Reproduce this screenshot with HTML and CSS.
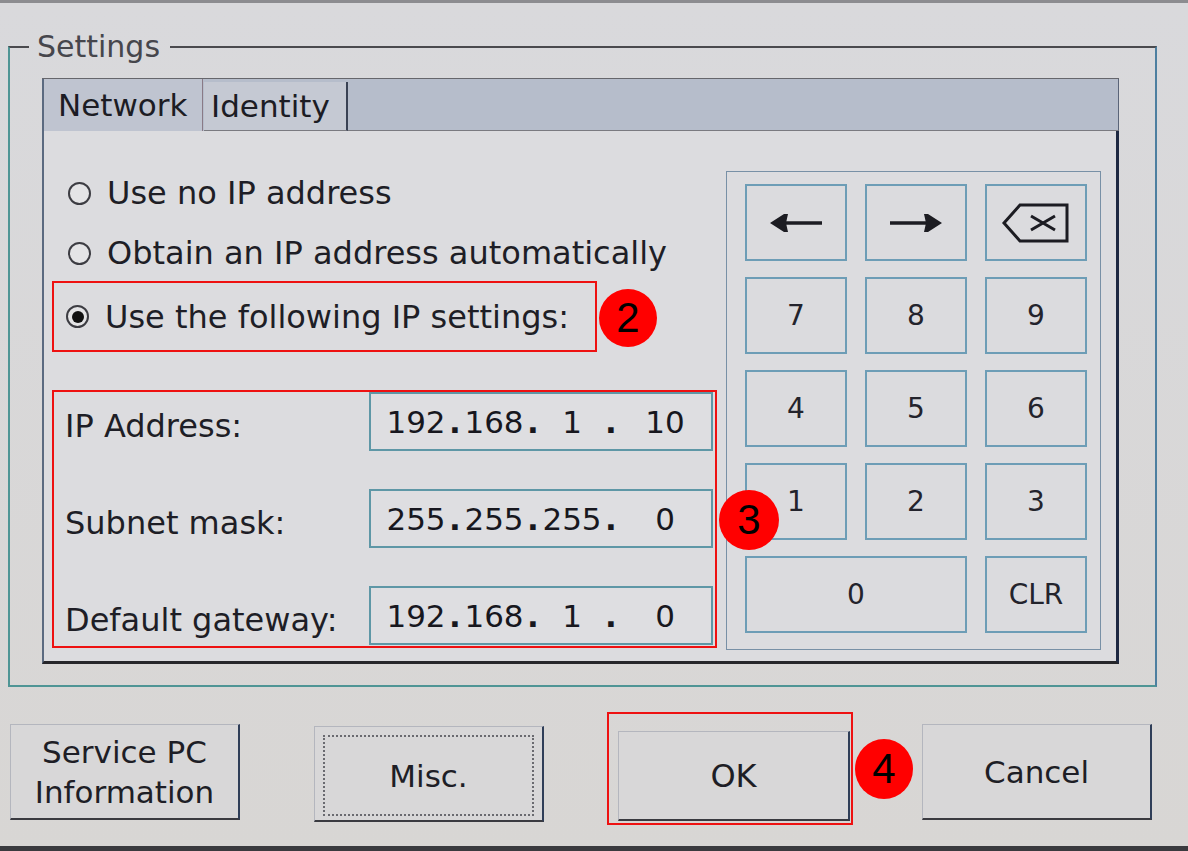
FILE: index.html
```html
<!DOCTYPE html>
<html lang="en">
<head>
  <meta charset="UTF-8" />
  <meta name="viewport" content="width=device-width, initial-scale=1.0" />
  <title>Settings</title>
  <link rel="stylesheet" href="styles.css">
</head>
<body>
  <div class="screen">
    <fieldset class="settings">
      <legend>Settings</legend>

      <div class="tabctl">
        <div class="tab-strip">
          <div class="tab active">Network</div>
          <div class="tab">Identity</div>
          <div class="tab-fill"></div>
        </div>

        <div class="panel">
          <div class="left-col">
            <div class="radio-row">
              <span class="radio"></span>
              <span>Use no IP address</span>
            </div>
            <div class="radio-row">
              <span class="radio"></span>
              <span>Obtain an IP address automatically</span>
            </div>
            <div class="mark-row">
              <div class="redbox radio-row picked">
                <span class="radio checked"></span>
                <span>Use the following IP settings:</span>
              </div>
              <div class="badge">2</div>
            </div>

            <div class="redbox fields">
              <div class="field">
                <span class="label">IP Address:</span>
                <div class="ipbox">
                  <span class="seg">192</span><span class="dot">.</span>
                  <span class="seg">168</span><span class="dot">.</span>
                  <span class="seg">1</span><span class="dot">.</span>
                  <span class="seg last">10</span>
                </div>
              </div>
              <div class="field">
                <span class="label">Subnet mask:</span>
                <div class="ipbox">
                  <span class="seg">255</span><span class="dot">.</span>
                  <span class="seg">255</span><span class="dot">.</span>
                  <span class="seg">255</span><span class="dot">.</span>
                  <span class="seg last">0</span>
                </div>
              </div>
              <div class="field">
                <span class="label">Default gateway:</span>
                <div class="ipbox">
                  <span class="seg">192</span><span class="dot">.</span>
                  <span class="seg">168</span><span class="dot">.</span>
                  <span class="seg">1</span><span class="dot">.</span>
                  <span class="seg last">0</span>
                </div>
              </div>
              <div class="badge badge-3">3</div>
            </div>
          </div>

          <div class="keypad">
            <div class="key">
              <svg width="54" height="22" viewBox="0 0 54 22">
                <line x1="12" y1="11" x2="53" y2="11" stroke="#1c1c22" stroke-width="3.5" />
                <path d="M1 11 L15 2 L19 2 L17 11 L19 20 L15 20 Z" fill="#1c1c22" />
              </svg>
            </div>
            <div class="key">
              <svg width="54" height="22" viewBox="0 0 54 22">
                <line x1="1" y1="11" x2="42" y2="11" stroke="#1c1c22" stroke-width="3.5" />
                <path d="M53 11 L39 2 L35 2 L37 11 L35 20 L39 20 Z" fill="#1c1c22" />
              </svg>
            </div>
            <div class="key">
              <svg width="70" height="42" viewBox="0 0 70 42">
                <path d="M19 3 H66 V39 H19 L3 21 Z" fill="none" stroke="#1c1c22" stroke-width="3" stroke-linejoin="miter" />
                <path d="M30 14 L54 28 M30 28 L54 14" stroke="#1c1c22" stroke-width="3" />
              </svg>
            </div>
            <div class="key">7</div>
            <div class="key">8</div>
            <div class="key">9</div>
            <div class="key">4</div>
            <div class="key">5</div>
            <div class="key">6</div>
            <div class="key">1</div>
            <div class="key">2</div>
            <div class="key">3</div>
            <div class="key wide">0</div>
            <div class="key">CLR</div>
          </div>
        </div>
      </div>
    </fieldset>

    <div class="actions">
      <button class="btn">Service PC<br>Information</button>
      <button class="btn focus"><span class="focus-ring">Misc.</span></button>
      <div class="ok-wrap">
        <button class="btn ok">OK</button>
        <span class="ok-mark"></span>
        <div class="badge badge-4">4</div>
      </div>
      <button class="btn">Cancel</button>
    </div>

    <div class="bezel"></div>
  </div>
</body>
</html>
```

FILE: styles.css
```css
body {
  margin: 0;
  padding: 0;
  background: #d9d8d9;
  font-family: "DejaVu Sans", Verdana, sans-serif;
  color: #1e1e26;
  overflow: hidden;
}

.screen {
  width: 1188px;
  height: 851px;
  box-sizing: border-box;
  padding-top: 32px;
  border-top: 3px solid #8c8c90;
  display: flex;
  flex-direction: column;
  background: linear-gradient(#d9d9dc, #d8d6d4);
}

/* group box */
.settings {
  box-sizing: border-box;
  width: 1149px;
  margin: -3px 0 0 8px;
  padding: 16px 36px 21px 32px;
  border: 2px solid #4f9595;
  border-top-color: #4a4a4e;
  border-right-color: #4d7fa0;
  min-width: 0;
}

.settings legend {
  font-size: 30px;
  line-height: 30px;
  color: #46464c;
  padding: 0 10px 0 8px;
  margin-left: -13px;
}

/* tab control */
.tabctl {
  width: 1077px;
}

.tab-strip {
  display: flex;
  align-items: flex-end;
  height: 53px;
  box-sizing: border-box;
  border-top: 1px solid #66666c;
  background: #b6bdcb;
}

.tab {
  box-sizing: border-box;
  font-size: 31px;
  display: flex;
  align-items: center;
  color: #1c1c24;
}

.tab.active {
  width: 161px;
  height: 52px;
  padding-left: 14px;
  background: #bfc4d0;
  border-left: 2px solid #5b6a80;
  border-right: 1px solid #8a7a86;
}

.tab:not(.active) {
  width: 144px;
  height: 49px;
  margin-left: 1px;
  padding-left: 7px;
  background: #c5c9d3;
  border-right: 2px solid #3a4254;
  border-bottom: 1px solid #7a7a80;
}

.tab-fill {
  flex: 1;
  height: 100%;
  box-sizing: border-box;
  border-bottom: 1px solid #7a7a80;
  border-right: 1px solid #5a6478;
}

.panel {
  display: flex;
  height: 533px;
  box-sizing: border-box;
  background: #dcdcdf;
  border-left: 2px solid #5b6a80;
  border-right: 3px solid #1d2842;
  border-bottom: 3px solid #26262a;
}

.left-col {
  width: 674px;
  margin-left: 8px;
  padding-top: 32px;
  position: relative;
}

.radio-row {
  display: flex;
  align-items: center;
  gap: 16px;
  height: 60px;
  padding-left: 16px;
  font-size: 32px;
}

.radio {
  box-sizing: border-box;
  width: 23px;
  height: 23px;
  border: 2px solid #3c3c42;
  border-radius: 50%;
  display: flex;
  align-items: center;
  justify-content: center;
  background: #e4e4e6;
}

.radio.checked::after {
  content: "";
  width: 12px;
  height: 12px;
  border-radius: 50%;
  background: #111;
}

.redbox {
  border: 2px solid #ee1111;
}

.mark-row {
  display: flex;
  align-items: center;
  margin-top: -2px;
}

.picked {
  box-sizing: border-box;
  width: 545px;
  height: 71px;
  padding-left: 12px;
}

.badge {
  width: 58px;
  height: 58px;
  border-radius: 50%;
  background: #ff0000;
  color: #000;
  font-family: "Liberation Sans", Arial, sans-serif;
  font-size: 42px;
  display: flex;
  align-items: center;
  justify-content: center;
}

.mark-row .badge {
  margin-left: 2px;
  margin-top: 3px;
}

.fields {
  position: relative;
  box-sizing: border-box;
  width: 665px;
  height: 258px;
  margin-top: 38px;
  padding: 0 2px 1px 11px;
  display: flex;
  flex-direction: column;
  gap: 38px;
}

.field {
  display: flex;
  align-items: center;
  height: 59px;
  font-size: 32px;
}

.field .label {
  flex: 1;
  padding-top: 8px;
}

.field:last-of-type .label {
  padding-top: 0;
}

.ipbox {
  box-sizing: border-box;
  width: 344px;
  height: 59px;
  display: flex;
  align-items: center;
  padding-left: 14px;
  border: 2px solid #5e97a6;
  background: #dedee1;
  font-size: 31px;
  color: #17171e;
}

.seg {
  width: 62px;
  text-align: center;
}

.seg.last {
  flex: 1;
}

.dot {
  width: 16px;
  text-align: center;
  font-weight: bold;
}

.badge-3 {
  position: absolute;
  left: 665px;
  top: 98px;
  width: 60px;
  height: 60px;
  z-index: 2;
}

/* keypad */
.keypad {
  box-sizing: border-box;
  width: 375px;
  height: 479px;
  margin-top: 40px;
  padding: 12px 13px 16px 18px;
  border: 1px solid #7890a6;
  display: grid;
  grid-template-columns: repeat(3, 102px);
  grid-auto-rows: 77px;
  gap: 16px 18px;
}

.key {
  border: 2px solid #6d9db6;
  background: #dbdbde;
  display: flex;
  align-items: center;
  justify-content: center;
  font-size: 28px;
  color: #23232c;
}

.key.wide {
  grid-column: span 2;
}

/* bottom buttons */
.actions {
  display: flex;
  align-items: flex-start;
  gap: 74px;
  margin: 37px 0 0 10px;
}

.btn {
  box-sizing: border-box;
  width: 230px;
  height: 96px;
  font-family: "DejaVu Sans", Verdana, sans-serif;
  font-size: 31px;
  line-height: 40px;
  color: #1e1e26;
  background: #d8d7d8;
  border: 1px solid #b4b6be;
  border-right: 2px solid #2f3e58;
  border-bottom: 2px solid #3a3a40;
  padding: 0;
}

.btn.focus {
  padding: 8px;
  margin-top: 2px;
}

.focus-ring {
  display: flex;
  align-items: center;
  justify-content: center;
  height: 100%;
  border: 2px dotted #6a6a70;
}

.ok-wrap {
  position: relative;
  width: 230px;
}

.btn.ok {
  width: 232px;
  height: 90px;
  margin-top: 7px;
  font-size: 32px;
}

.ok-mark {
  position: absolute;
  left: -11px;
  top: -12px;
  width: 246px;
  height: 113px;
  box-sizing: border-box;
  border: 2px solid #ee1111;
}

.badge-4 {
  position: absolute;
  left: 237px;
  top: 15px;
  height: 60px;
}

.bezel {
  margin-top: auto;
  height: 5px;
  background: #3a3a3e;
}
```
